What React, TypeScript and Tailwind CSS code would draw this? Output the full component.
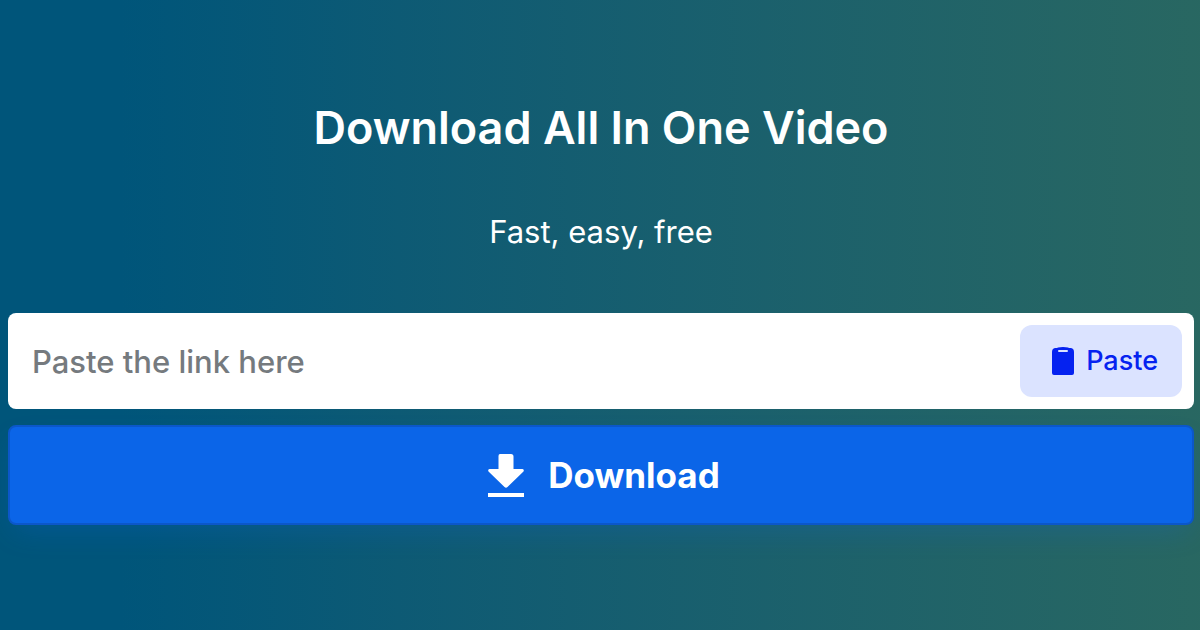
import { useState } from "react";

const ClipboardIcon = () => (
    <svg viewBox="0 0 22 28" className="w-[22px] h-7" aria-hidden="true">
        <path
            fill="currentColor"
            fillRule="evenodd"
            d="M6 .6Q8 0 11 0T16 .6L17 1H19Q22 1.500 22 5V26Q22 28 20 28H2Q0 28 0 26V5Q0 1.500 3 1H5ZM7 3Q6 3 6 4T7 5H15Q16 5 16 4T15 3Z"
        />
    </svg>
);

const DownloadIcon = () => (
    <svg viewBox="0 0 36 43" className="w-9 h-[43px]" fill="currentColor" aria-hidden="true">
        <path d="M12 0H23Q25.500 0 25.500 2.500V15H34.500Q36.500 15.500 35.500 17.500L19.500 33Q18 34.500 16.500 33L.5 17.500Q-.5 15.500 1.500 15H10.500V2Q10.500 0 12 0Z" />
        <path d="M0 39H36V43H0Z" />
    </svg>
);

const App = () => {
    const [link, setLink] = useState("");

    const handlePaste = async () => {
        const text = await navigator.clipboard.readText();
        setLink(text);
    };

    return (
        <main className="min-h-screen bg-linear-to-r from-[#00557a] from-10% to-[#2a6860] to-[105%] pl-2 pr-1.5 pt-24 pb-24 font-['Inter',sans-serif] text-white">
            <h1 className="text-center text-[45px] leading-16 font-semibold">Download All In One Video</h1>
            <p className="mt-12 text-center text-[31px] leading-12">Fast, easy, free</p>

            <form className="mt-[57px] flex flex-col gap-4" onSubmit={(e) => e.preventDefault()}>
                <div className="flex h-24 items-center rounded-lg bg-white pr-3">
                    <input
                        type="text"
                        aria-label="Video link"
                        placeholder="Paste the link here"
                        value={link}
                        onChange={(e) => setLink(e.target.value)}
                        className="h-full min-w-0 flex-1 px-6 text-[31px] font-medium text-gray-900 outline-none placeholder:text-[#757a7e]"
                    />
                    <button
                        type="button"
                        onClick={handlePaste}
                        className="flex h-18 items-center gap-3 rounded-xl bg-[#dbe3ff] pl-8 pr-6 text-[27px] font-medium text-[#0522f0]"
                    >
                        <ClipboardIcon />
                        Paste
                    </button>
                </div>
                <button
                    type="submit"
                    className="flex h-[100px] items-center justify-center gap-6 rounded-lg border-2 border-[#0b57ca] bg-[#0b65e8] pl-1.5 text-[35px] font-bold shadow-[0_12px_28px_-6px_rgba(11,101,232,0.24)]"
                >
                    <DownloadIcon />
                    Download
                </button>
            </form>
        </main>
    );
};

export default App;
